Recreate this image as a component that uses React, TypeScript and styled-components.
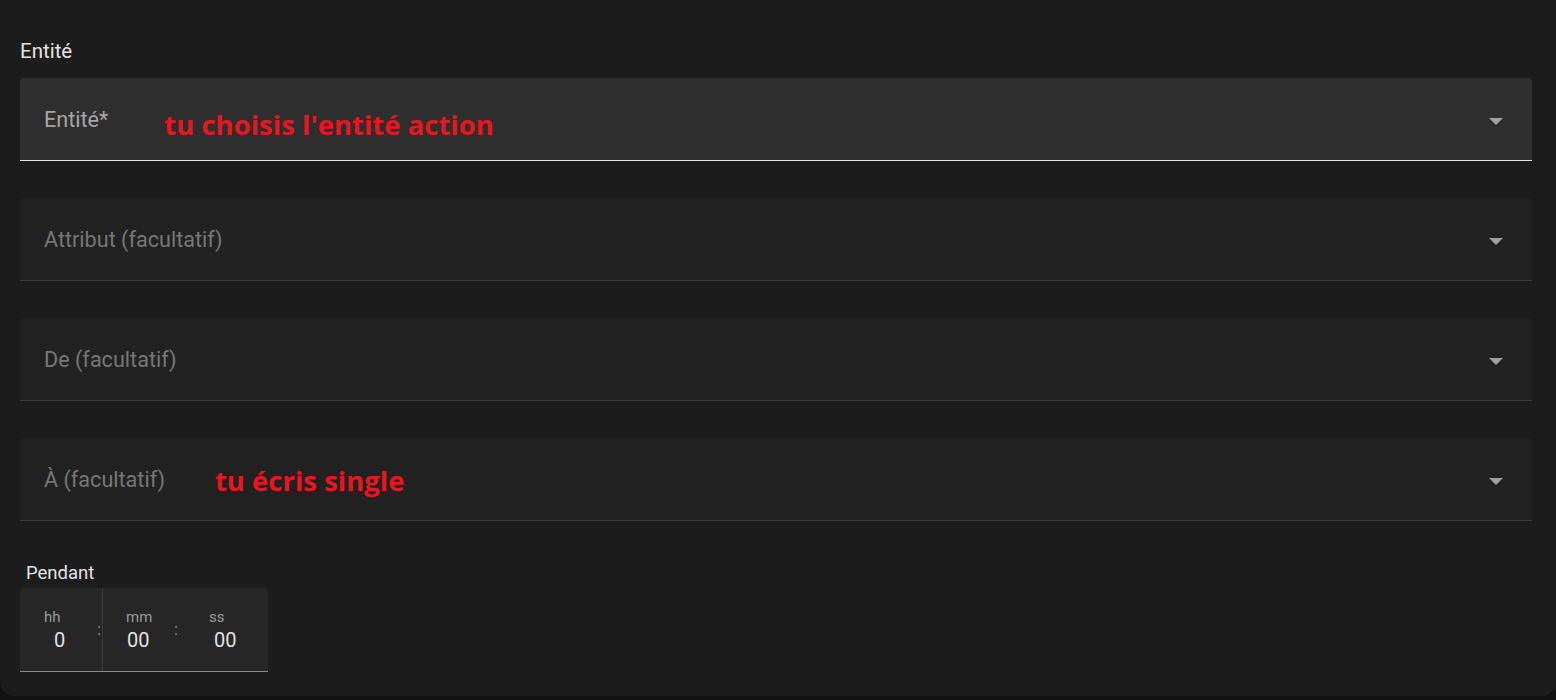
import * as React from 'react'
import styled, { createGlobalStyle } from 'styled-components'

const GlobalStyle = createGlobalStyle`
  html, body {
    margin: 0;
    padding: 0;
    background: #111111;
  }
  body {
    font-family: Roboto, "Noto Sans", sans-serif;
  }
`

const Card = styled.div`
  box-sizing: border-box;
  height: 696px;
  background: #1c1c1c;
  border-radius: 0 0 14px 14px;
  padding: 39px 24px 0 20px;
`

const SectionTitle = styled.div<{ $size: number; $indent?: number }>`
  font-size: ${p => p.$size}px;
  line-height: ${p => Math.floor(p.$size) + 4}px;
  color: #e4e4e4;
  margin-left: ${p => p.$indent || 0}px;
`

const FieldList = styled.div`
  display: flex;
  flex-direction: column;
  gap: 37px;
  margin-top: 15px;
`

const Field = styled.div<{ $active?: boolean }>`
  display: flex;
  align-items: center;
  height: 82px;
  padding: 0 29px 0 24px;
  background: ${p => (p.$active ? '#2e2e2e' : '#212121')};
  border-bottom: 1px solid ${p => (p.$active ? '#e6e6e6' : '#3a3a3a')};
  border-radius: 4px 4px 0 0;
`

const FieldLabel = styled.span<{ $active?: boolean }>`
  font-size: 21.6px;
  color: ${p => (p.$active ? '#a6a6a6' : '#777777')};
  white-space: nowrap;
`

// red hand-written annotations laid over the screenshot
const Note = styled.span<{ $gap: number; $drop: number }>`
  font-family: "Open Sans", "Noto Sans", sans-serif;
  font-weight: 700;
  font-size: 27.5px;
  line-height: 1.36;
  color: #e8161f;
  margin-left: ${p => p.$gap}px;
  margin-top: ${p => p.$drop}px;
  white-space: nowrap;
`

const Spacer = styled.div`
  flex: 1;
`

const Caret = styled.svg`
  width: 14px;
  height: 7px;
  margin-top: 4px;
  fill: #a0a0a0;
`

const Duration = styled.div`
  margin-top: 41px;
`

const TimeBox = styled.div`
  display: flex;
  width: 248px;
  height: 83px;
  margin-top: 4px;
  background: #262626;
  border-bottom: 1px solid #8a8a8a;
  border-radius: 4px 4px 0 0;
`

const Unit = styled.div<{ $width: number; $pad: number; $valueShift: number; $divider?: boolean }>`
  box-sizing: border-box;
  width: ${p => p.$width}px;
  padding: 20px 0 0 ${p => p.$pad}px;
  border-left: ${p => (p.$divider ? '1px solid #3a3a3a' : 'none')};
  > b {
    display: block;
    margin-left: ${p => p.$valueShift}px;
  }
`

const UnitLabel = styled.div`
  font-size: 15px;
  line-height: 18px;
  color: #9c9c9c;
`

const UnitValue = styled.b`
  font-weight: 400;
  font-size: 20px;
  line-height: 24px;
  color: #e2e2e2;
  margin-top: 2px;
`

const Colon = styled.div`
  width: 6px;
  padding-top: 29px;
  text-align: center;
  font-size: 17px;
  line-height: 24px;
  color: #8c8c8c;
`

const fields = [
  { label: 'Entité*', active: true, note: "tu choisis l'entité action", gap: 56, drop: 11 },
  { label: 'Attribut (facultatif)' },
  { label: 'De (facultatif)' },
  { label: 'À (facultatif)', note: 'tu écris single', gap: 50, drop: 4 }
]

export default function App() {
  return (
    <>
      <GlobalStyle />
      <Card>
        <SectionTitle $size={20.5}>Entité</SectionTitle>
        <FieldList>
          {fields.map(f => (
            <Field key={f.label} $active={f.active}>
              <FieldLabel $active={f.active}>{f.label}</FieldLabel>
              {f.note && (
                <Note $gap={f.gap || 0} $drop={f.drop || 0}>
                  {f.note}
                </Note>
              )}
              <Spacer />
              <Caret viewBox="0 0 14 7">
                <path d="M0 0h14L7 7z" />
              </Caret>
            </Field>
          ))}
        </FieldList>
        <Duration>
          <SectionTitle $size={18.5} $indent={6}>Pendant</SectionTitle>
          <TimeBox>
            <Unit $width={76} $pad={24} $valueShift={10}>
              <UnitLabel>hh</UnitLabel>
              <UnitValue>0</UnitValue>
            </Unit>
            <Colon>:</Colon>
            <Unit $width={71} $pad={23} $valueShift={1} $divider>
              <UnitLabel>mm</UnitLabel>
              <UnitValue>00</UnitValue>
            </Unit>
            <Colon>:</Colon>
            <Unit $width={89} $pad={30} $valueShift={5}>
              <UnitLabel>ss</UnitLabel>
              <UnitValue>00</UnitValue>
            </Unit>
          </TimeBox>
        </Duration>
      </Card>
    </>
  )
}
